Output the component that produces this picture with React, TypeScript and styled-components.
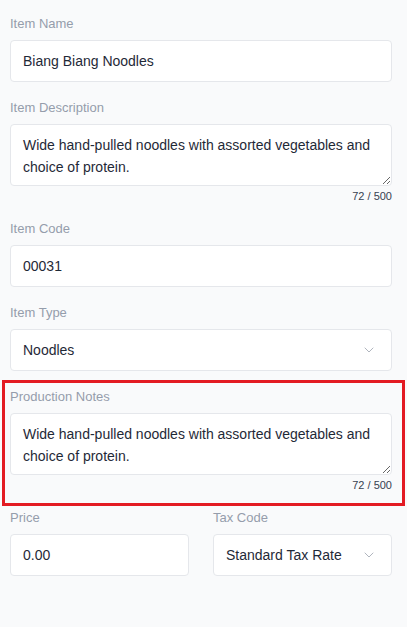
import React from "react";
import styled, { createGlobalStyle } from "styled-components";
import { ChevronDown } from "lucide-react";

const GlobalStyle = createGlobalStyle`
  html, body {
    margin: 0;
    padding: 0;
    background: #f9fafb;
  }
  body {
    font-family: "Liberation Sans", Arial, sans-serif;
  }
`;

const Form = styled.div`
  display: flex;
  flex-direction: column;
  gap: 18px;
  padding: 16px 15px 40px 10px;
  min-height: 627px;
  box-sizing: border-box;
  background: #f9fafb;
`;

const Field = styled.div`
  display: flex;
  flex-direction: column;
`;

const HighlightedField = styled(Field)`
  border: 3px solid #e31b23;
  margin: -9px -13px -14px -8px;
  padding: 6px 10px 11px 5px;
`;

const Label = styled.label`
  font-size: 13px;
  line-height: 16px;
  color: #959dab;
  margin-bottom: 8px;
`;

const Input = styled.input`
  height: 42px;
  box-sizing: border-box;
  border: 1px solid #e5e7eb;
  border-radius: 4px;
  background: #fff;
  padding: 0 12px;
  font-family: inherit;
  font-size: 14px;
  color: #1f2937;
  outline: none;
  width: 100%;
`;

const TextArea = styled.textarea`
  height: 62px;
  box-sizing: border-box;
  border: 1px solid #e5e7eb;
  border-radius: 4px;
  background: #fff;
  padding: 9px 12px 6px;
  font-family: inherit;
  font-size: 14px;
  line-height: 22px;
  color: #1f2937;
  resize: vertical;
  outline: none;
  width: 100%;
  display: block;
`;

const Counter = styled.div`
  margin-top: 4px;
  text-align: right;
  font-size: 11px;
  line-height: 13px;
  color: #374151;
`;

const Select = styled.div`
  height: 42px;
  box-sizing: border-box;
  border: 1px solid #e5e7eb;
  border-radius: 4px;
  background: #fff;
  padding: 0 14px 0 12px;
  display: flex;
  align-items: center;
  justify-content: space-between;
  font-size: 14px;
  color: #1f2937;
`;

const Row = styled.div`
  display: grid;
  grid-template-columns: 1fr 1fr;
  gap: 24px;
`;

const description =
  "Wide hand-pulled noodles with assorted vegetables and choice of protein.";

export default function App() {
  return (
    <>
      <GlobalStyle />
      <Form>
        <Field>
          <Label>Item Name</Label>
          <Input defaultValue="Biang Biang Noodles" />
        </Field>
        <Field>
          <Label>Item Description</Label>
          <TextArea defaultValue={description} />
          <Counter>72 / 500</Counter>
        </Field>
        <Field>
          <Label>Item Code</Label>
          <Input defaultValue="00031" />
        </Field>
        <Field>
          <Label>Item Type</Label>
          <Select>
            Noodles
            <ChevronDown size={16} strokeWidth={1.3} color="#a3a9b4" />
          </Select>
        </Field>
        <HighlightedField>
          <Label>Production Notes</Label>
          <TextArea defaultValue={description} />
          <Counter>72 / 500</Counter>
        </HighlightedField>
        <Row>
          <Field>
            <Label>Price</Label>
            <Input defaultValue="0.00" />
          </Field>
          <Field>
            <Label>Tax Code</Label>
            <Select>
              Standard Tax Rate
              <ChevronDown size={16} strokeWidth={1.3} color="#a3a9b4" />
            </Select>
          </Field>
        </Row>
      </Form>
    </>
  );
}
